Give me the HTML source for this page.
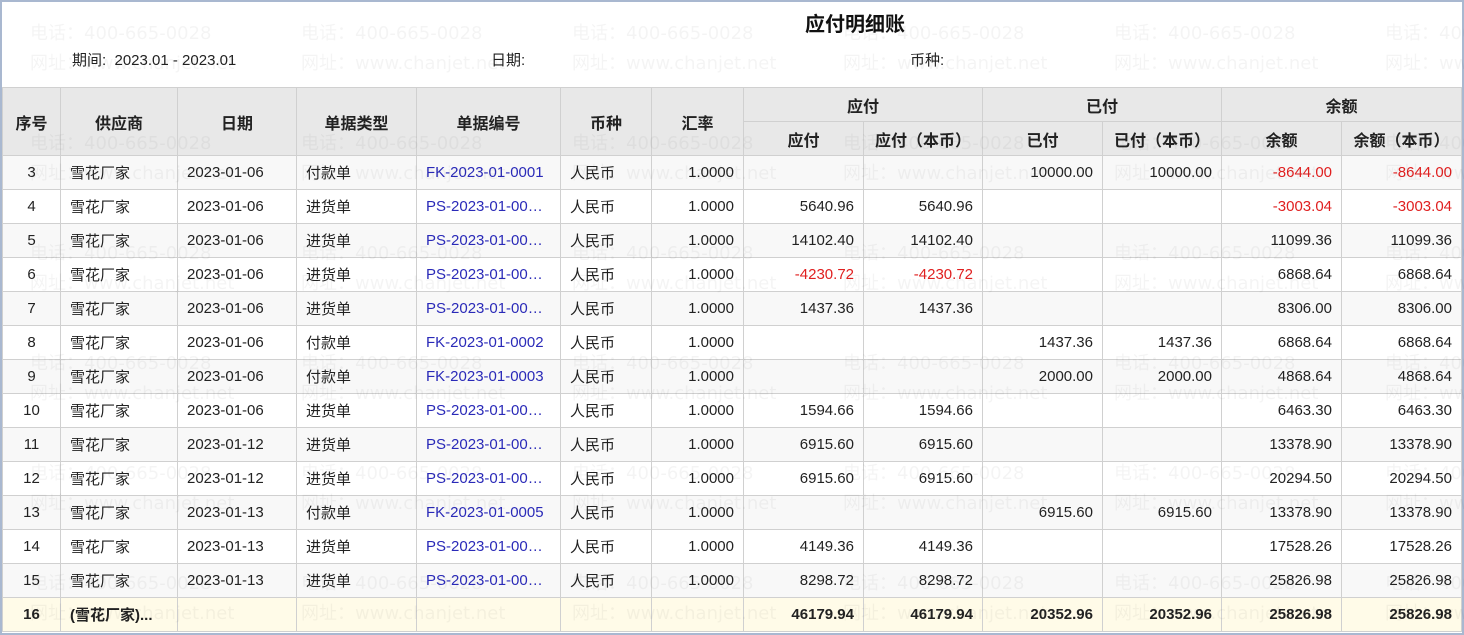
<!DOCTYPE html>
<html><head><meta charset="utf-8"><style>
html,body{margin:0;padding:0;}
body{width:1464px;height:635px;overflow:hidden;background:#fff;position:relative;font-family:"Liberation Sans","Noto Sans CJK SC",sans-serif;font-size:15px;color:#222;}
.frame{position:absolute;left:0;top:0;width:1460px;height:631px;border:2px solid #a9b8d0;}
.title{position:absolute;left:0;width:1710px;top:8px;text-align:center;font-size:20px;font-weight:bold;color:#111;}
.lbl{position:absolute;top:49px;font-size:15px;color:#222;}
table{position:absolute;left:2px;top:87px;border-collapse:collapse;table-layout:fixed;}
td,th{border:1px solid #d0d0d0;height:33px;padding:0 9px;white-space:nowrap;overflow:hidden;}
th{background:#e8e8e8;font-weight:bold;font-size:16px;color:#222;}
td{font-size:15px;}
tr.o td{background:#fff;}
tr.e td{background:#f8f8f8;}
.c{text-align:center;}.r{text-align:right;}
.b{color:#2a2ab8;}.red{color:#e02020;}
tr.t td{background:#fffbe8;font-weight:bold;}
.wm{position:absolute;color:rgba(0,0,0,0.045);font-family:"DejaVu Sans","Noto Sans CJK SC",sans-serif;font-size:18px;white-space:nowrap;pointer-events:none;}
</style></head><body>
<div class="frame"></div>
<div class="title">应付明细账</div>
<div class="lbl" style="left:72px">期间:&nbsp; 2023.01 - 2023.01</div>
<div class="lbl" style="left:491px">日期:</div>
<div class="lbl" style="left:910px">币种:</div>
<table>
<colgroup><col style="width:58px"><col style="width:117px"><col style="width:119px"><col style="width:120px"><col style="width:144px"><col style="width:91px"><col style="width:92px"><col style="width:120px"><col style="width:119px"><col style="width:120px"><col style="width:119px"><col style="width:120px"><col style="width:120px"></colgroup>
<tr><th rowspan="2" style="padding:0">序号</th><th rowspan="2">供应商</th><th rowspan="2">日期</th><th rowspan="2">单据类型</th><th rowspan="2">单据编号</th><th rowspan="2">币种</th><th rowspan="2">汇率</th><th colspan="2">应付</th><th colspan="2">已付</th><th colspan="2">余额</th></tr>
<tr><th>应付</th><th>应付（本币）</th><th>已付</th><th>已付（本币）</th><th>余额</th><th>余额（本币）</th></tr>
<tr class="e"><td class="c">3</td><td>雪花厂家</td><td>2023-01-06</td><td>付款单</td><td class="b">FK-2023-01-0001</td><td>人民币</td><td class="r">1.0000</td><td></td><td></td><td class="r">10000.00</td><td class="r">10000.00</td><td class="r red">-8644.00</td><td class="r red">-8644.00</td></tr>
<tr class="o"><td class="c">4</td><td>雪花厂家</td><td>2023-01-06</td><td>进货单</td><td class="b">PS-2023-01-00…</td><td>人民币</td><td class="r">1.0000</td><td class="r">5640.96</td><td class="r">5640.96</td><td></td><td></td><td class="r red">-3003.04</td><td class="r red">-3003.04</td></tr>
<tr class="e"><td class="c">5</td><td>雪花厂家</td><td>2023-01-06</td><td>进货单</td><td class="b">PS-2023-01-00…</td><td>人民币</td><td class="r">1.0000</td><td class="r">14102.40</td><td class="r">14102.40</td><td></td><td></td><td class="r">11099.36</td><td class="r">11099.36</td></tr>
<tr class="o"><td class="c">6</td><td>雪花厂家</td><td>2023-01-06</td><td>进货单</td><td class="b">PS-2023-01-00…</td><td>人民币</td><td class="r">1.0000</td><td class="r red">-4230.72</td><td class="r red">-4230.72</td><td></td><td></td><td class="r">6868.64</td><td class="r">6868.64</td></tr>
<tr class="e"><td class="c">7</td><td>雪花厂家</td><td>2023-01-06</td><td>进货单</td><td class="b">PS-2023-01-00…</td><td>人民币</td><td class="r">1.0000</td><td class="r">1437.36</td><td class="r">1437.36</td><td></td><td></td><td class="r">8306.00</td><td class="r">8306.00</td></tr>
<tr class="o"><td class="c">8</td><td>雪花厂家</td><td>2023-01-06</td><td>付款单</td><td class="b">FK-2023-01-0002</td><td>人民币</td><td class="r">1.0000</td><td></td><td></td><td class="r">1437.36</td><td class="r">1437.36</td><td class="r">6868.64</td><td class="r">6868.64</td></tr>
<tr class="e"><td class="c">9</td><td>雪花厂家</td><td>2023-01-06</td><td>付款单</td><td class="b">FK-2023-01-0003</td><td>人民币</td><td class="r">1.0000</td><td></td><td></td><td class="r">2000.00</td><td class="r">2000.00</td><td class="r">4868.64</td><td class="r">4868.64</td></tr>
<tr class="o"><td class="c">10</td><td>雪花厂家</td><td>2023-01-06</td><td>进货单</td><td class="b">PS-2023-01-00…</td><td>人民币</td><td class="r">1.0000</td><td class="r">1594.66</td><td class="r">1594.66</td><td></td><td></td><td class="r">6463.30</td><td class="r">6463.30</td></tr>
<tr class="e"><td class="c">11</td><td>雪花厂家</td><td>2023-01-12</td><td>进货单</td><td class="b">PS-2023-01-00…</td><td>人民币</td><td class="r">1.0000</td><td class="r">6915.60</td><td class="r">6915.60</td><td></td><td></td><td class="r">13378.90</td><td class="r">13378.90</td></tr>
<tr class="o"><td class="c">12</td><td>雪花厂家</td><td>2023-01-12</td><td>进货单</td><td class="b">PS-2023-01-00…</td><td>人民币</td><td class="r">1.0000</td><td class="r">6915.60</td><td class="r">6915.60</td><td></td><td></td><td class="r">20294.50</td><td class="r">20294.50</td></tr>
<tr class="e"><td class="c">13</td><td>雪花厂家</td><td>2023-01-13</td><td>付款单</td><td class="b">FK-2023-01-0005</td><td>人民币</td><td class="r">1.0000</td><td></td><td></td><td class="r">6915.60</td><td class="r">6915.60</td><td class="r">13378.90</td><td class="r">13378.90</td></tr>
<tr class="o"><td class="c">14</td><td>雪花厂家</td><td>2023-01-13</td><td>进货单</td><td class="b">PS-2023-01-00…</td><td>人民币</td><td class="r">1.0000</td><td class="r">4149.36</td><td class="r">4149.36</td><td></td><td></td><td class="r">17528.26</td><td class="r">17528.26</td></tr>
<tr class="e"><td class="c">15</td><td>雪花厂家</td><td>2023-01-13</td><td>进货单</td><td class="b">PS-2023-01-00…</td><td>人民币</td><td class="r">1.0000</td><td class="r">8298.72</td><td class="r">8298.72</td><td></td><td></td><td class="r">25826.98</td><td class="r">25826.98</td></tr>
<tr class="t"><td class="c">16</td><td>(雪花厂家)...</td><td></td><td></td><td></td><td></td><td></td><td class="r">46179.94</td><td class="r">46179.94</td><td class="r">20352.96</td><td class="r">20352.96</td><td class="r">25826.98</td><td class="r">25826.98</td></tr>
</table>
<div id="wms"></div>
<script>
var w=document.getElementById('wms'),xs=[30,301,572,843,1114,1385];
for(var k=0;k<6;k++){for(var i=0;i<xs.length;i++){
var a=document.createElement('div');a.className='wm';a.style.left=xs[i]+'px';a.style.top=(19+110*k)+'px';a.textContent='电话：400-665-0028';w.appendChild(a);
var b=document.createElement('div');b.className='wm';b.style.left=xs[i]+'px';b.style.top=(49+110*k)+'px';b.textContent='网址：www.chanjet.net';w.appendChild(b);}}
</script>
</body></html>
